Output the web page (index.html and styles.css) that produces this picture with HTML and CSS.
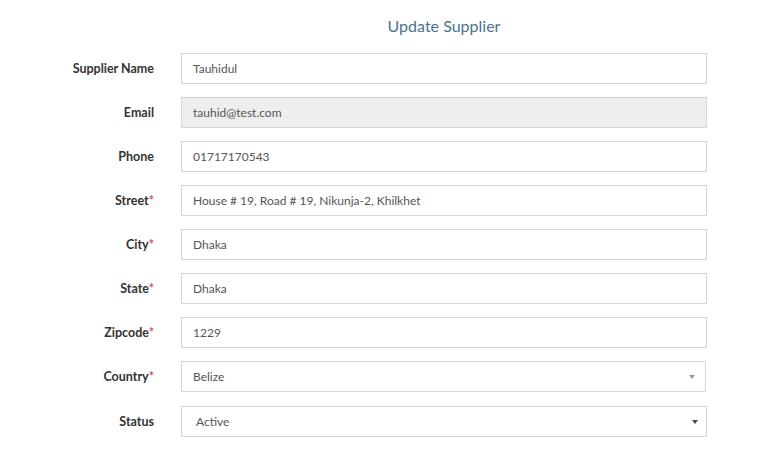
FILE: index.html
```html
<!DOCTYPE html>
<html>
<head>
<meta charset="utf-8">
<link rel="stylesheet" href="styles.css">
</head>
<body>
<div class="page">
  <div class="form">
    <div class="title-row"><div></div><h2 class="title">Update Supplier</h2></div>
    <div class="row"><label class="lbl">Supplier Name</label><div class="field">Tauhidul</div></div>
    <div class="row"><label class="lbl">Email</label><div class="field disabled">tauhid@test.com</div></div>
    <div class="row"><label class="lbl">Phone</label><div class="field">01717170543</div></div>
    <div class="row"><label class="lbl">Street<span class="req">*</span></label><div class="field">House # 19, Road # 19, Nikunja-2, Khilkhet</div></div>
    <div class="row"><label class="lbl">City<span class="req">*</span></label><div class="field">Dhaka</div></div>
    <div class="row"><label class="lbl">State<span class="req">*</span></label><div class="field">Dhaka</div></div>
    <div class="row"><label class="lbl">Zipcode<span class="req">*</span></label><div class="field">1229</div></div>
    <div class="row"><label class="lbl">Country<span class="req">*</span></label><div class="field select light">Belize<span class="caret"></span></div></div>
    <div class="row status"><label class="lbl">Status</label><div class="field select wide">Active<span class="caret dark"></span></div></div>
  </div>
</div>
</body>
</html>
```

FILE: styles.css
```css
html, body { margin: 0; padding: 0; background: #fff; }
body { font-family: "Lato", "Open Sans", sans-serif; color: #333; }
.page { padding: 10px 54px 0 0; }
.form { display: flex; flex-direction: column; gap: 13px; }
.title-row, .row { display: grid; grid-template-columns: 155px 1fr; column-gap: 26px; align-items: center; }
.title { margin: 4px 0 2px; font-weight: 400; font-size: 16px; color: #4a7190; text-align: center; line-height: 24px; }
.lbl { text-align: right; font-weight: 700; font-size: 12.5px; color: #333; padding-right: 1px; }
.req { color: #e0505a; }
.field { position: relative; height: 31px; box-sizing: border-box; border: 1px solid #d2d6de; padding: 0 11px; font-size: 12px; color: #555; line-height: 29px; background: #fff; }
.field.disabled { background: #eee; }
.field.select.light { margin-right: 1px; }
.field.select.wide { padding-left: 14px; }
.row.status { margin-top: 1px; }
.caret { position: absolute; right: 10px; top: 13px; width: 0; height: 0; border-left: 3px solid transparent; border-right: 3px solid transparent; border-top: 4px solid #999; }
.caret.dark { border-top-color: #444; right: 8px; }
```
